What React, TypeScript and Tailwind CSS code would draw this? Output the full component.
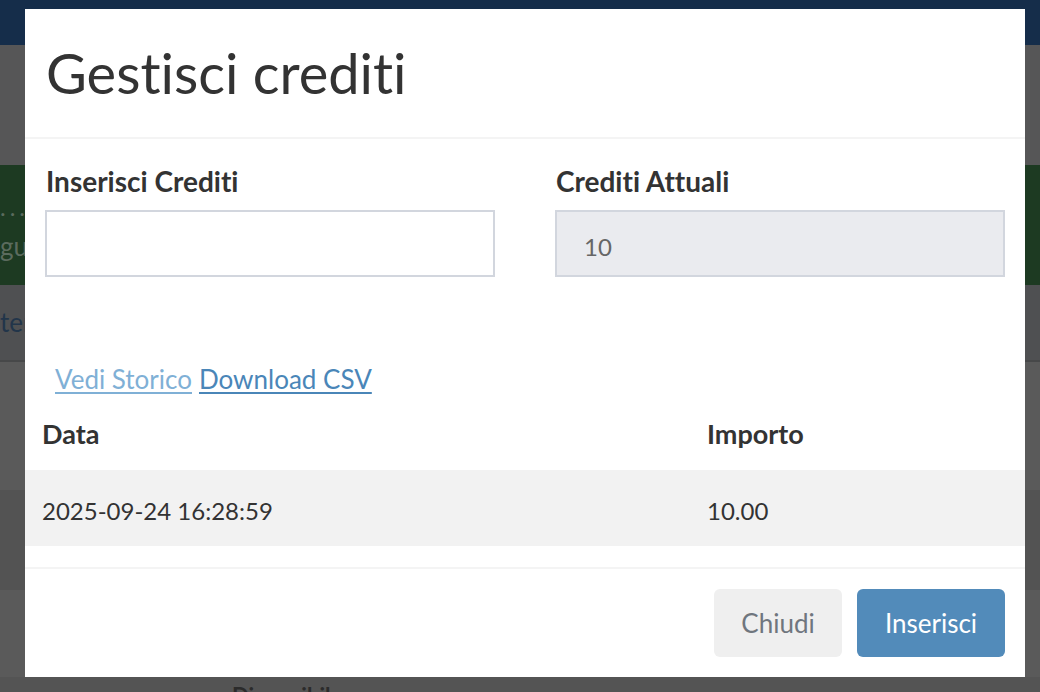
import React from 'react'

const font = { fontFamily: 'Lato, "Noto Sans", sans-serif' }

function Backdrop() {
  return (
    <div className="flex flex-col">
      <div className="h-[45px] bg-[#152d4a]" />
      <div className="h-[120px] bg-[#565657]" />
      <div className="flex h-[120px] flex-col bg-[#1d3a22] text-[#5b6b5e]">
        <span className="mt-[30px] text-[24px] leading-none tracking-[4px]">....</span>
        <span className="mt-[14px] text-[26px] leading-none">guida</span>
      </div>
      <div className="flex h-[77px] items-center border-b-2 border-[#474849] bg-[#4f5052] text-[26px] text-[#22354a]">
        <span>terni</span>
      </div>
      <div className="h-[128px] bg-[#5a5a5a]" />
      <div className="h-[100px] bg-[#535353]" />
      <div className="h-[87px] bg-[#5a5a5a]" />
      <div className="h-[15px] overflow-hidden bg-[#545454] pl-[232px] pt-[8px] text-[22px] font-bold leading-[22px] text-[#2b2b2b]">
        Disponibile
      </div>
    </div>
  )
}

export default function App() {
  return (
    <div
      className="relative h-[692px] w-[1040px] overflow-hidden bg-[#565657] [font-variant-ligatures:none]"
      style={font}
    >
      <Backdrop />

      <div className="absolute left-[25px] top-[9px] flex h-[668px] w-[1000px] flex-col bg-white text-[#333]">
        <div className="flex h-[130px] items-center border-b-2 border-[#f4f4f4] px-[21px]">
          <h1 className="text-[56px] font-normal leading-none text-[#333]">Gestisci crediti</h1>
        </div>

        <div className="flex flex-1 flex-col pt-[25px] pb-[20px]">
          <div className="grid grid-cols-2 gap-[60px] px-[20px]">
            <div>
              <label className="mb-[12px] block pl-[1px] text-[28px] font-bold leading-[34px]">Inserisci Crediti</label>
              <input
                type="text"
                className="block h-[67px] w-full border-2 border-[#d2d6de] bg-white px-[28px] pt-[4px] text-[24px] outline-none"
              />
            </div>
            <div>
              <label className="mb-[12px] block pl-[1px] text-[28px] font-bold leading-[34px]">Crediti Attuali</label>
              <input
                type="text"
                readOnly
                value="10"
                className="block h-[67px] w-full border-2 border-[#d2d6de] bg-[#eaebef] px-[27px] pt-[5px] text-[24px] text-[#666] outline-none"
              />
            </div>
          </div>

          <div className="mt-[85px] flex gap-[7px] px-[30px] text-[26px] leading-[34px]">
            <a href="#" className="text-[#7fb0d6] underline underline-offset-[3px]">Vedi Storico</a>
            <a href="#" className="text-[#4a86b8] underline underline-offset-[3px]">Download CSV</a>
          </div>

          <table className="mt-[3px] w-full border-collapse text-left text-[24px]">
            <thead>
              <tr className="h-[71px]">
                <th className="w-[682px] pl-[17px] text-[27px] font-bold">Data</th>
                <th className="text-[27px] font-bold">Importo</th>
              </tr>
            </thead>
            <tbody>
              <tr className="h-[76px] bg-[#f2f2f2]">
                <td className="pl-[17px] pt-[6px]">2025-09-24 16:28:59</td>
                <td className="pt-[6px]">10.00</td>
              </tr>
            </tbody>
          </table>
        </div>

        <div className="flex justify-end gap-[15px] border-t-2 border-[#f4f4f4] px-[20px] pt-[20px] pb-[20px]">
          <button className="h-[68px] w-[128px] rounded-[6px] bg-[#efefef] text-[26px] text-[#6f767e]">Chiudi</button>
          <button className="h-[68px] w-[148px] rounded-[6px] bg-[#528bba] text-[26px] text-white">Inserisci</button>
        </div>
      </div>
    </div>
  )
}
